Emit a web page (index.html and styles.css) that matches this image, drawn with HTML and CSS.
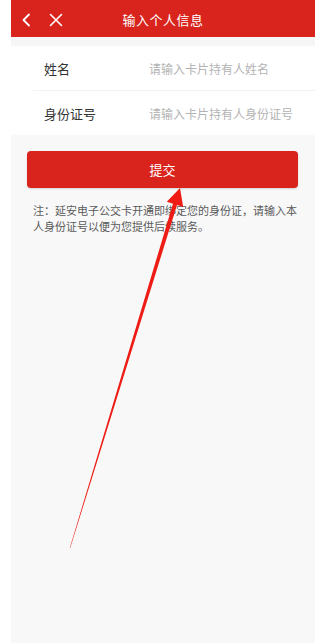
FILE: index.html
```html
<!DOCTYPE html>
<html lang="zh-CN">
<head>
    <meta charset="UTF-8">
    <meta name="viewport" content="width=device-width, initial-scale=1.0">
    <title>输入个人信息</title>
    <link rel="stylesheet" href="styles.css">
</head>
<body>
    <div id="app">
        <div class="header">
            <div class="header-icons">
                <svg class="icon" width="12" height="14" viewBox="0 0 12 14">
                    <path d="M8 1.5 L2.5 7 L8 12.5" fill="none" stroke="#fff" stroke-width="1.8" stroke-linecap="round" stroke-linejoin="round"/>
                </svg>
                <svg class="icon" width="14" height="14" viewBox="0 0 14 14">
                    <path d="M1.5 1.5 L12.5 12.5 M12.5 1.5 L1.5 12.5" fill="none" stroke="#fff" stroke-width="1.6" stroke-linecap="round"/>
                </svg>
            </div>
            <h1>输入个人信息</h1>
        </div>
        <div class="gap"></div>
        <div class="form">
            <div class="row">
                <span class="label">姓名</span>
                <input type="text" placeholder="请输入卡片持有人姓名">
            </div>
            <div class="row">
                <span class="label">身份证号</span>
                <input type="text" placeholder="请输入卡片持有人身份证号">
            </div>
        </div>
        <button class="submit-button">提交</button>
        <p class="note">注：延安电子公交卡开通即绑定您的身份证，请输入本人身份证号以便为您提供后续服务。</p>
    </div>
    <svg class="arrow" width="333" height="643" viewBox="0 0 333 643">
        <polygon points="180,188 183.2,207 177,205 70.2,548 69.8,548 173,203.8 166.8,201.8" fill="#ee1c14"/>
    </svg>
</body>
</html>
```

FILE: styles.css
```css
body {
    margin: 0;
    padding: 0;
    background-color: #ffffff;
    font-family: "Noto Sans CJK SC", "Noto Sans", sans-serif;
}
#app {
    width: 304px;
    margin-left: 11px;
    min-height: 643px;
    background-color: #f8f8f8;
}
.header {
    height: 37px;
    background-color: #d9241d;
    display: flex;
    align-items: center;
    justify-content: center;
    position: relative;
}
.header-icons {
    position: absolute;
    left: 10px;
    top: 13px;
    display: flex;
    align-items: center;
    gap: 16px;
}
.icon {
    display: block;
}
.header h1 {
    margin: 0;
    color: #ffffff;
    font-size: 13px;
    font-weight: normal;
    letter-spacing: 0.5px;
    padding-top: 2px;
}
.gap {
    height: 9px;
    background-color: #f6f6f6;
}
.form {
    background-color: #ffffff;
}
.row {
    height: 44px;
    display: flex;
    align-items: center;
    padding-left: 33px;
}
.row + .row {
    border-top: 1px solid #f2f2f2;
    margin-left: 22px;
    padding-left: 11px;
}
.label {
    width: 105px;
    font-size: 13px;
    color: #333333;
}
.row input {
    border: none;
    outline: none;
    background: none;
    padding: 0;
    font-family: inherit;
    font-size: 12px;
    color: #333333;
    width: 160px;
}
.row input::placeholder {
    color: #b3b3b3;
}
.submit-button {
    display: block;
    width: 271px;
    height: 37px;
    margin: 16px 0 0 16px;
    border: none;
    border-radius: 4px;
    background-color: #d9241d;
    color: #ffffff;
    font-family: inherit;
    font-size: 13px;
    box-shadow: 0 1px 2px rgba(0, 0, 0, 0.15);
}
.note {
    margin: 14px 16px 0 22px;
    font-size: 11px;
    line-height: 16px;
    color: #5a5a5a;
}
.arrow {
    position: absolute;
    left: 0;
    top: 0;
    pointer-events: none;
}
```
